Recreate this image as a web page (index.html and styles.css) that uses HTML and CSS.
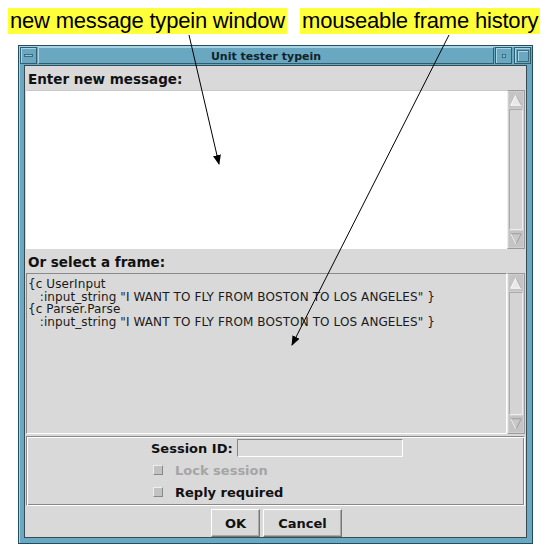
FILE: index.html
```html
<!DOCTYPE html>
<html>
<head>
<meta charset="utf-8">
<link rel="stylesheet" href="styles.css">
</head>
<body>
<div class="page">
  <div class="labels">
    <span class="label">new message typein window</span>
    <span class="label">mouseable frame history</span>
  </div>
  <div class="window">
    <div class="titlebar">
      <div class="tbtn menu"><span class="dash"></span></div>
      <div class="title">Unit tester typein</div>
      <div class="tbtn min"><span class="dot"></span></div>
      <div class="tbtn max"><span class="sq"></span></div>
    </div>
    <div class="client">
      <div class="caption">Enter new message:</div>
      <div class="pane">
        <div class="area white"></div>
        <div class="scrollbar">
          <div class="arrow up"><svg width="16" height="16" viewBox="0 0 16 16"><polygon points="8,2 14,14 2,14" fill="#e8e8e8" stroke="#fff" stroke-width="1"/><polyline points="14,14 8,2" fill="none" stroke="#999" stroke-width="1"/></svg></div>
          <div class="track"></div>
          <div class="arrow down"><svg width="16" height="16" viewBox="0 0 16 16"><polygon points="2,2 14,2 8,14" fill="#c8c8c8" stroke="#999" stroke-width="1"/><polyline points="2,2 8,14" fill="none" stroke="#fff" stroke-width="1"/></svg></div>
        </div>
      </div>
      <div class="caption">Or select a frame:</div>
      <div class="pane tall">
        <div class="area list">
          <div>{c UserInput</div>
          <div>&nbsp;&nbsp;&nbsp;:input_string "I WANT TO FLY FROM BOSTON TO LOS ANGELES" }</div>
          <div>{c Parser.Parse</div>
          <div>&nbsp;&nbsp;&nbsp;:input_string "I WANT TO FLY FROM BOSTON TO LOS ANGELES" }</div>
        </div>
        <div class="scrollbar">
          <div class="arrow up"><svg width="16" height="16" viewBox="0 0 16 16"><polygon points="8,2 14,14 2,14" fill="#e8e8e8" stroke="#fff" stroke-width="1"/><polyline points="14,14 8,2" fill="none" stroke="#999" stroke-width="1"/></svg></div>
          <div class="track"></div>
          <div class="arrow down"><svg width="16" height="16" viewBox="0 0 16 16"><polygon points="2,2 14,2 8,14" fill="#c8c8c8" stroke="#999" stroke-width="1"/><polyline points="2,2 8,14" fill="none" stroke="#fff" stroke-width="1"/></svg></div>
        </div>
      </div>
      <div class="options">
        <div class="row"><span class="olabel">Session ID:</span><span class="input"></span></div>
        <div class="row check disabled"><span class="box"></span><span>Lock session</span></div>
        <div class="row check"><span class="box"></span><span>Reply required</span></div>
      </div>
      <div class="buttons">
        <span class="btn ok">OK</span>
        <span class="btn cancel">Cancel</span>
      </div>
    </div>
  </div>
  <svg class="arrows" width="551" height="551" viewBox="0 0 551 551">
    <defs>
      <marker id="ah" markerWidth="10" markerHeight="8" refX="9" refY="4" orient="auto" markerUnits="userSpaceOnUse">
        <polygon points="0,0 10,4 0,8" fill="#000"/>
      </marker>
    </defs>
    <line x1="189" y1="35" x2="219" y2="164" stroke="#000" stroke-width="1" marker-end="url(#ah)"/>
    <line x1="449" y1="35" x2="292" y2="345" stroke="#000" stroke-width="1" marker-end="url(#ah)"/>
  </svg>
</div>
</body>
</html>
```

FILE: styles.css
```css
html, body {
  margin: 0;
  padding: 0;
  background: #fff;
}
.page {
  position: relative;
  width: 551px;
  height: 551px;
  overflow: hidden;
  font-family: "DejaVu Sans", sans-serif;
}
.labels {
  display: flex;
  gap: 13px;
  padding: 8px 0 0 8px;
  height: 37px;
  box-sizing: border-box;
}
.label {
  background: #ffff3a;
  font-family: "Liberation Sans", Arial, sans-serif;
  font-size: 22px;
  line-height: 26px;
  height: 26px;
  padding: 0 2px;
  color: #000;
  letter-spacing: -0.2px;
}
.window {
  margin: 8px 0 0 18px;
  width: 515px;
  height: 499px;
  box-sizing: border-box;
  background: #6aa7c0;
  border: 1px solid #234d60;
  padding: 0 5px 5px;
  display: flex;
  flex-direction: column;
  box-shadow: inset 1px 1px 0 #a9d4e4;
}
.titlebar {
  height: 19px;
  flex-shrink: 0;
  display: flex;
  align-items: center;
  margin: 0 -5px;
  padding: 0 1px;
  gap: 0;
}
.tbtn {
  width: 17px;
  height: 17px;
  box-sizing: border-box;
  border: 1px solid #2f5e72;
  box-shadow: inset 1px 1px 0 #a9d4e4;
  display: flex;
  align-items: center;
  justify-content: center;
  background: #6aa7c0;
}
.tbtn.min { margin-right: 2px; }
.dash {
  width: 9px;
  height: 3px;
  background: #8fc3d6;
  border: 1px solid #3d6b7e;
  box-sizing: border-box;
}
.dot {
  width: 4px;
  height: 4px;
  background: #8fc3d6;
  border: 1px solid #3d6b7e;
  box-sizing: border-box;
}
.sq {
  width: 12px;
  height: 12px;
  border: 1px solid #3d6b7e;
  box-shadow: inset 1px 1px 0 #a9d4e4;
  box-sizing: border-box;
}
.title {
  flex: 1;
  height: 17px;
  text-align: center;
  font-family: "DejaVu Sans", sans-serif;
  font-weight: bold;
  font-size: 11px;
  line-height: 17px;
  color: #10232b;
  border: 1px solid #2f5e72;
  border-left-color: #a9d4e4;
  border-top-color: #a9d4e4;
  box-sizing: border-box;
  margin: 0 1px;
}
.client {
  flex: 1;
  background: #d9d9d9;
  border: 1px solid #3b4b52;
  display: flex;
  flex-direction: column;
  padding: 0 0 0 1px;
}
.caption {
  flex-shrink: 0;
  font-weight: bold;
  font-size: 13.5px;
  height: 22px;
  line-height: 22px;
  padding-left: 2px;
  padding-top: 2px;
  color: #111;
}
.pane {
  flex-shrink: 0;
  display: flex;
  height: 159px;
  margin-right: 1px;
}
.pane.tall {
  height: 161px;
}
.area {
  flex: 1;
  box-sizing: border-box;
}
.area.white {
  background: #fff;
  border-top: 1px solid #c8c8c8;
}
.area.list {
  background: #d9d9d9;
  border-top: 1px solid #8a8a8a;
  border-left: 1px solid #8a8a8a;
  border-right: 1px solid #fff;
  border-bottom: 1px solid #fff;
  font-size: 12px;
  line-height: 12.5px;
  padding: 4px 0 0 1px;
  color: #1a1a1a;
  white-space: nowrap;
  letter-spacing: 0.1px;
}
.scrollbar {
  width: 18px;
  display: flex;
  flex-direction: column;
  background: #cfcfcf;
  border: 1px solid #9a9a9a;
  border-left-color: #eee;
  box-sizing: border-box;
  padding: 1px;
}
.arrow {
  height: 16px;
  background: #c4c4c4;
  display: flex;
}
.track {
  flex: 1;
  background: #d4d4d4;
  border: 1px solid #aaa;
  border-right-color: #eee;
  border-bottom-color: #eee;
  margin: 1px 0;
}
.options {
  flex-shrink: 0;
  margin: 2px 1px 0 0;
  height: 70px;
  box-sizing: border-box;
  border-top: 1px solid #888;
  border-left: 1px solid #888;
  border-right: 1px solid #fff;
  border-bottom: 1px solid #fff;
  box-shadow: inset 1px 1px 0 #fff, inset -1px -1px 0 #888;
  display: flex;
  flex-direction: column;
  padding: 0 0 0 124px;
}
.row {
  display: flex;
  align-items: center;
  height: 22px;
  font-size: 13px;
  font-weight: bold;
  color: #111;
}
.olabel {
  margin-right: 4px;
}
.input {
  width: 166px;
  height: 18px;
  box-sizing: border-box;
  background: #dadada;
  border: 1px solid #888;
  border-right-color: #fff;
  border-bottom-color: #fff;
}
.check {
  padding-left: 2px;
  font-weight: bold;
}
.box {
  width: 10px;
  height: 10px;
  box-sizing: border-box;
  background: #c2c2c2;
  border: 1px solid #eee;
  border-right-color: #888;
  border-bottom-color: #888;
  margin-right: 12px;
}
.disabled {
  color: #a5a5a5;
}
.buttons {
  flex: 1;
  display: flex;
  justify-content: center;
  align-items: center;
  gap: 3px;
  padding: 3px 0 0 1px;
}
.btn {
  height: 28px;
  box-sizing: border-box;
  border: 1px solid #fff;
  border-right-color: #777;
  border-bottom-color: #777;
  box-shadow: inset -1px -1px 0 #a8a8a8;
  display: flex;
  align-items: center;
  justify-content: center;
  font-size: 13px;
  font-weight: bold;
  color: #111;
}
.ok { width: 49px; }
.cancel { width: 79px; }
.arrows {
  position: absolute;
  left: 0;
  top: 0;
  pointer-events: none;
}
```
